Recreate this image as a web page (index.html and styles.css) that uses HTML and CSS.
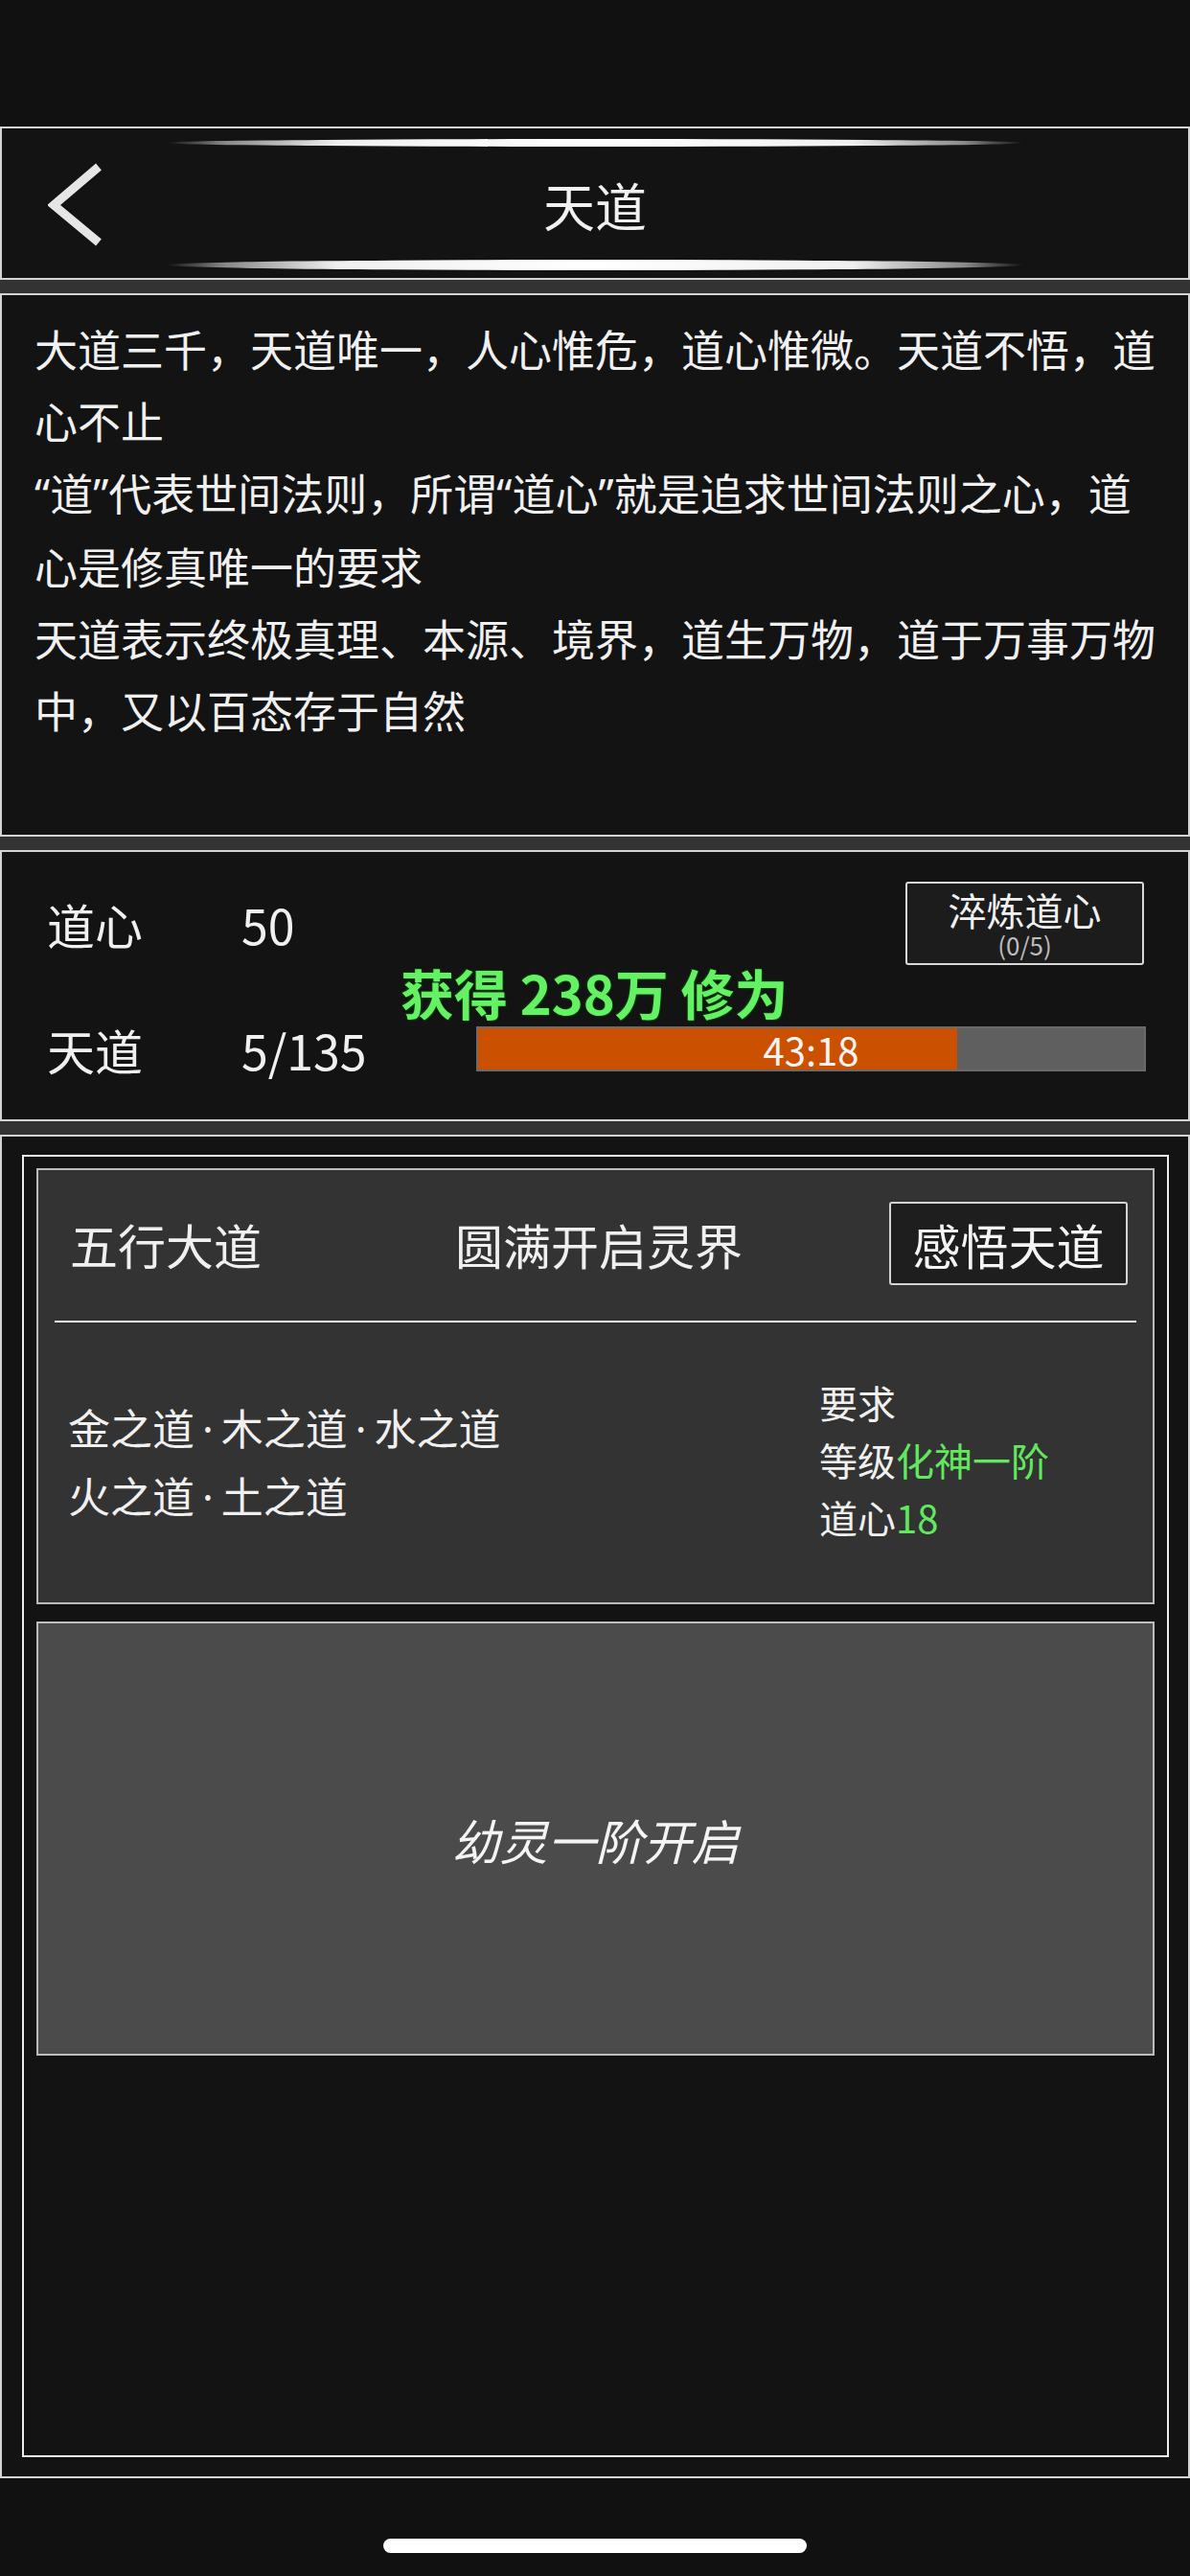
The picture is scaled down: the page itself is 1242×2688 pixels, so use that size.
FILE: index.html
```html
<!DOCTYPE html>
<html lang="zh-CN">
<head>
    <meta charset="UTF-8">
    <meta name="viewport" content="width=device-width, initial-scale=1.0">
    <title>天道</title>
    <link rel="stylesheet" href="styles.css">
</head>
<body>
    <div class="status-bar"></div>

    <div class="screen">
        <div class="panel header">
            <div class="glow glow-top"></div>
            <div class="header-row">
                <a class="back" href="#">
                    <svg width="60" height="90" viewBox="0 0 60 90">
                        <polyline points="53,5 6,45 53,84" fill="none" stroke="#e6e6e6" stroke-width="9" stroke-linecap="butt" stroke-linejoin="miter"/>
                    </svg>
                </a>
                <h1>天道</h1>
                <span></span>
            </div>
            <div class="glow glow-bottom"></div>
        </div>

        <div class="panel intro">
            <p>大道三千，天道唯一，人心惟危，道心惟微。天道不悟，道<br>心不止</p>
            <p><span class="q">“</span>道<span class="q">”</span>代表世间法则，所谓<span class="q">“</span>道心<span class="q">”</span>就是追求世间法则之心，道<br>心是修真唯一的要求</p>
            <p>天道表示终极真理、本源、境界，道生万物，道于万事万物<br>中，又以百态存于自然</p>
        </div>

        <div class="panel stats">
            <div class="stat-row first">
                <span class="stat-label">道心</span>
                <span class="stat-value">50</span>
                <button class="btn-refine">
                    <span>淬炼道心</span>
                    <small>(0/5)</small>
                </button>
            </div>
            <div class="stat-row second">
                <span class="stat-label">天道</span>
                <span class="stat-value">5/135</span>
                <div class="bar">
                    <div class="bar-fill" style="width: 72%"></div>
                    <span class="bar-text">43:18</span>
                </div>
            </div>
            <div class="gain">获得 238万 修为</div>
        </div>

        <div class="panel main">
            <div class="frame">
                <div class="card">
                    <div class="card-head">
                        <span class="card-title">五行大道</span>
                        <span class="card-goal">圆满开启灵界</span>
                        <button class="btn-enlighten">感悟天道</button>
                    </div>
                    <div class="divider"></div>
                    <div class="card-body">
                        <div class="ways">
                            金之道<span class="dot">·</span>木之道<span class="dot">·</span>水之道<br>
                            火之道<span class="dot">·</span>土之道
                        </div>
                        <div class="reqs">
                            要求<br>
                            等级<span class="green">化神一阶</span><br>
                            道心<span class="green">18</span>
                        </div>
                    </div>
                </div>
                <div class="card locked">
                    <em>幼灵一阶开启</em>
                </div>
            </div>
        </div>
    </div>

    <div class="home-area">
        <div class="home-indicator"></div>
    </div>
</body>
</html>
```

FILE: styles.css
```css
body {
    margin: 0;
    width: 1242px;
    height: 2688px;
    background: #111;
    color: #f0f0f0;
    font-family: "Noto Sans CJK SC", "Noto Sans", sans-serif;
    overflow: hidden;
}
.status-bar {
    height: 132px;
}
.screen {
    display: flex;
    flex-direction: column;
    gap: 14px;
    background: #333;
}
.panel {
    box-sizing: border-box;
    background: #131313;
    border: 2px solid #d4d4d4;
}
.header {
    height: 160px;
    display: flex;
    flex-direction: column;
    justify-content: space-between;
    padding: 11px 0 8px;
}
.glow {
    width: 896px;
    margin: 0 auto;
    border-radius: 50%;
    background: linear-gradient(90deg, rgba(255,255,255,0) 0%, rgba(255,255,255,0.5) 7%, #f0f0f0 20%, #fff 50%, #f0f0f0 80%, rgba(255,255,255,0.5) 93%, rgba(255,255,255,0) 100%);
}
.glow-top {
    height: 8px;
}
.glow-bottom {
    height: 11px;
}
.header-row {
    flex: 1;
    display: grid;
    grid-template-columns: 1fr auto 1fr;
    align-items: center;
    padding-top: 4px;
}
.back {
    display: flex;
    padding-left: 48px;
}
.header h1 {
    margin: 0;
    font-size: 54px;
    font-weight: 400;
    line-height: 1;
}
.intro {
    height: 567px;
    padding: 18px 20px 0 34px;
}
.intro p {
    margin: 0;
    font-size: 45px;
    line-height: 75px;
    white-space: nowrap;
}
.q,
.dot {
    font-family: "Noto Sans", sans-serif;
}
.dot {
    margin: 0 8px;
}
.stats {
    position: relative;
    height: 283px;
    padding: 31px 44px 0 47px;
}
.stat-row {
    display: flex;
    align-items: center;
    font-size: 50px;
}
.stat-row.first {
    height: 87px;
}
.stat-row.second {
    height: 47px;
    margin-top: 64px;
}
.stat-label {
    width: 203px;
}
.stat-value {
    width: 245px;
}
.btn-refine {
    margin-left: auto;
    margin-right: 2px;
    width: 249px;
    height: 87px;
    box-sizing: border-box;
    background: #1c1c1c;
    border: 2px solid #d8d8d8;
    border-radius: 3px;
    color: #f0f0f0;
    font-family: inherit;
    display: flex;
    flex-direction: column;
    align-items: center;
    justify-content: center;
    padding: 0;
}
.btn-refine span {
    font-size: 40px;
    line-height: 44px;
}
.btn-refine small {
    font-size: 26px;
    line-height: 30px;
    color: #bdbdbd;
}
.bar {
    position: relative;
    margin-left: auto;
    width: 699px;
    height: 47px;
    box-sizing: border-box;
    background: #5f5f5f;
    border: 2px solid #6a6a6a;
}
.bar-fill {
    height: 100%;
    background: #cb5100;
}
.bar-text {
    position: absolute;
    inset: 0;
    display: flex;
    align-items: center;
    justify-content: center;
    font-size: 40px;
    color: #f4f4f4;
}
.gain {
    position: absolute;
    left: 416px;
    top: 118px;
    font-size: 56px;
    font-weight: 700;
    line-height: 1;
    color: #64f264;
    text-shadow: 0 0 2px #0c3a0c, 1px 1px 1px #0c3a0c, -1px -1px 1px #0c3a0c;
    white-space: nowrap;
}
.main {
    height: 1402px;
    padding: 19px 20px 20px 21px;
}
.frame {
    box-sizing: border-box;
    height: 100%;
    border: 2px solid #ececec;
    padding: 12px 13px;
    display: flex;
    flex-direction: column;
    gap: 18px;
}
.card {
    box-sizing: border-box;
    border: 2px solid #bcbcbc;
    background: #333;
}
.card:first-child {
    height: 455px;
    display: flex;
    flex-direction: column;
}
.card-head {
    display: grid;
    grid-template-columns: 1fr auto 1fr;
    align-items: center;
    padding: 33px 26px 0 33px;
    font-size: 50px;
}
.card-goal {
    text-align: center;
}
.btn-enlighten {
    justify-self: end;
    width: 249px;
    height: 87px;
    box-sizing: border-box;
    background: #1e1e1e;
    border: 2px solid #d4d4d4;
    border-radius: 3px;
    color: #f4f4f4;
    font-family: inherit;
    font-size: 50px;
    padding: 0;
}
.divider {
    height: 2px;
    margin: 37px 17px 0;
    background: #f0f0f0;
}
.card-body {
    flex: 1;
    display: grid;
    grid-template-columns: 1fr 348px;
    align-items: center;
    padding-left: 31px;
}
.ways {
    font-size: 44px;
    line-height: 69px;
}
.reqs {
    font-size: 40px;
    line-height: 60px;
    padding-bottom: 6px;
}
.green {
    color: #62e85e;
}
.card.locked {
    height: 453px;
    background: #4b4b4b;
    display: flex;
    align-items: center;
    justify-content: center;
}
.locked em {
    font-size: 50px;
    font-style: italic;
    color: #f4f4f4;
}
.home-area {
    height: 102px;
    display: flex;
    justify-content: center;
    padding-top: 63px;
    box-sizing: border-box;
}
.home-indicator {
    width: 442px;
    height: 15px;
    border-radius: 8px;
    background: #fff;
}
```
